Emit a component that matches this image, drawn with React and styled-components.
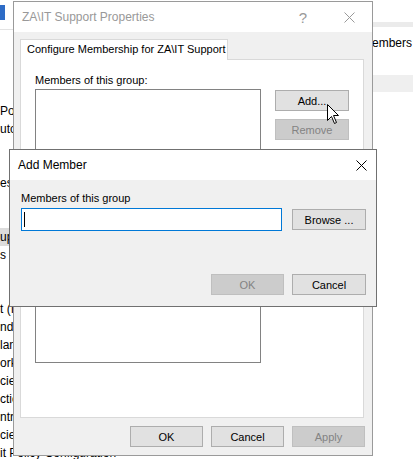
import React from 'react';
import styled, { createGlobalStyle } from 'styled-components';

const GlobalStyle = createGlobalStyle`
  html, body {
    margin: 0;
    padding: 0;
    background: #fff;
  }
  body {
    font-family: "Liberation Sans", Arial, sans-serif;
    font-size: 11px;
    color: #000;
    overflow: hidden;
  }
`;

const Desktop = styled.div`
  position: relative;
  width: 413px;
  height: 459px;
  overflow: hidden;
  background: #fff;
`;

/* the console behind the dialogs */
const Console = styled.div`
  display: flex;
  flex-direction: column;
  height: 100%;
`;

const Toolbar = styled.div`
  height: 22px;
  flex-shrink: 0;
  display: flex;
  align-items: flex-start;
`;

const ToolIcon = styled.div`
  width: 5px;
  height: 15px;
  margin-top: 5px;
  background: #2e6cc6;
`;

const Main = styled.div`
  display: flex;
  flex: 1;
`;

const TreePane = styled.div`
  width: 200px;
  flex-shrink: 0;
`;

const TreeTop = styled.div`
  height: 7px;
  border-bottom: 1px solid #e3e3e3;
  margin-bottom: 72px;
`;

const TreeRow = styled.div`
  height: 18px;
  line-height: 18px;
  white-space: nowrap;
  font-size: 12px;
  background: ${p => (p.$selected ? '#dcdcdc' : 'transparent')};
`;

const ListPane = styled.div`
  flex: 1;
  display: flex;
  flex-direction: column;
`;

const ListTop = styled.div`
  height: 5px;
  background: #ebebeb;
`;

const ListHeader = styled.div`
  height: 32px;
  line-height: 32px;
  padding-left: 162px;
  font-size: 12px;
  white-space: nowrap;
  margin-bottom: 16px;
`;

const ListRow = styled.div`
  height: 17px;
  background: ${p => (p.$selected ? '#efefef' : 'transparent')};
`;

/* dialogs */
const Window = styled.div`
  position: absolute;
  left: ${p => p.$x}px;
  top: ${p => p.$y}px;
  width: ${p => p.$w}px;
  height: ${p => p.$h}px;
  box-sizing: border-box;
  border: 1px solid ${p => (p.$active ? '#707070' : '#9a9a9a')};
  background: #f0f0f0;
  display: flex;
  flex-direction: column;
`;

const TitleBar = styled.div`
  height: 30px;
  flex-shrink: 0;
  background: #fff;
  display: flex;
  align-items: center;
  padding-left: 8px;
`;

const Title = styled.div`
  flex: 1;
  font-size: 12px;
  color: ${p => (p.$active ? '#000' : '#999')};
  white-space: nowrap;
`;

const CaptionButton = styled.div`
  width: ${p => p.$w}px;
  height: 30px;
  display: flex;
  align-items: center;
  justify-content: center;
  color: ${p => (p.$active ? '#000' : '#999')};
  font-size: 15px;
`;

const PropsBody = styled.div`
  flex: 1;
  display: flex;
  flex-direction: column;
  padding: 7px 8px 0 6px;
`;

const TabStrip = styled.div`
  display: flex;
  position: relative;
  z-index: 1;
  margin-bottom: -1px;
`;

const Tab = styled.div`
  height: 21px;
  box-sizing: border-box;
  width: 208px;
  border: 1px solid #d9d9d9;
  border-bottom: none;
  background: #fff;
  padding-left: 6px;
  line-height: 19px;
  white-space: nowrap;
`;

const TabPanel = styled.div`
  height: 359px;
  box-sizing: border-box;
  border: 1px solid #d9d9d9;
  background: #fff;
  padding: 13px 14px 0 14px;
`;

const Label = styled.div`
  line-height: 14px;
  margin-bottom: ${p => p.$gap}px;
  white-space: nowrap;
`;

const MembersRow = styled.div`
  display: flex;
  gap: 14px;
`;

const ListBox = styled.div`
  width: 228px;
  height: 274px;
  box-sizing: border-box;
  border: 1px solid #828282;
  background: #fff;
`;

const ButtonColumn = styled.div`
  display: flex;
  flex-direction: column;
  gap: 8px;
  padding-top: 1px;
`;

const Button = styled.div`
  width: ${p => p.$w || 73}px;
  height: 21px;
  box-sizing: border-box;
  border: 1px solid ${p => (p.$disabled ? '#bfbfbf' : '#adadad')};
  background: ${p => (p.$disabled ? '#cccccc' : '#e1e1e1')};
  color: ${p => (p.$disabled ? '#838383' : '#000')};
  display: flex;
  align-items: center;
  justify-content: center;
  white-space: nowrap;
`;

const Footer = styled.div`
  display: flex;
  justify-content: flex-end;
  gap: 8px;
  padding-top: ${p => p.$top}px;
  margin-right: ${p => p.$right || 0}px;
`;

const AddBody = styled.div`
  flex: 1;
  padding: 11px 10px 0 11px;
`;

const InputRow = styled.div`
  display: flex;
  align-items: center;
  gap: 10px;
`;

const InputBox = styled.div`
  width: 261px;
  height: 23px;
  box-sizing: border-box;
  border: 1px solid #0078d7;
  background: #fff;
  display: flex;
  align-items: center;
  padding-left: 2px;
`;

const Caret = styled.div`
  width: 1px;
  height: 15px;
  background: #000;
`;

const Pointer = styled.svg`
  position: absolute;
  left: 327px;
  top: 104px;
`;

const CloseIcon = ({ color }) => (
  <svg width="11" height="11" viewBox="0 0 11 11">
    <path d="M0.5 0.5 L10.5 10.5 M10.5 0.5 L0.5 10.5" stroke={color} strokeWidth="1" fill="none" />
  </svg>
);

const treeRows = [
  'Policies', 'utomatic', '', '', 'es', '', '', 'up', 's', '', '',
  't (Internet', 'ndows', 'lan', 'ork', 'cies', 'ctions', 'ntrol', 'cies',
  'it Policy Configuration',
];

export default function App() {
  return (
    <Desktop>
      <GlobalStyle />
      <Console>
        <Toolbar>
          <ToolIcon />
        </Toolbar>
        <Main>
          <TreePane>
            <TreeTop />
            {treeRows.map((t, i) => (
              <TreeRow key={i} $selected={i === 7}>{t || '\u00a0'}</TreeRow>
            ))}
          </TreePane>
          <ListPane>
            <ListTop />
            <ListHeader>Members</ListHeader>
            <ListRow $selected />
          </ListPane>
        </Main>
      </Console>

      <Window $x={13} $y={1} $w={360} $h={455}>
        <TitleBar>
          <Title>ZA\IT Support Properties</Title>
          <CaptionButton $w={46}>?</CaptionButton>
          <CaptionButton $w={46}><CloseIcon color="#999" /></CaptionButton>
        </TitleBar>
        <PropsBody>
          <TabStrip>
            <Tab>Configure Membership for ZA\IT Support</Tab>
          </TabStrip>
          <TabPanel>
            <Label $gap={2}>Members of this group:</Label>
            <MembersRow>
              <ListBox />
              <ButtonColumn>
                <Button $w={74}>Add...</Button>
                <Button $w={74} $disabled>Remove</Button>
              </ButtonColumn>
            </MembersRow>
          </TabPanel>
          <Footer $top={8} $right={-1}>
            <Button>OK</Button>
            <Button>Cancel</Button>
            <Button $disabled>Apply</Button>
          </Footer>
        </PropsBody>
      </Window>

      <Window $x={9} $y={149} $w={368} $h={158} $active>
        <TitleBar>
          <Title $active>Add Member</Title>
          <CaptionButton $w={29} $active><CloseIcon color="#000" /></CaptionButton>
        </TitleBar>
        <AddBody>
          <Label $gap={3}>Members of this group</Label>
          <InputRow>
            <InputBox><Caret /></InputBox>
            <Button $w={74}>Browse ...</Button>
          </InputRow>
          <Footer $top={43}>
            <Button $disabled>OK</Button>
            <Button $w={74}>Cancel</Button>
          </Footer>
        </AddBody>
      </Window>

      <Pointer width="13" height="21" viewBox="0 0 13 21">
        <path d="M0.5 0.5 L0.5 16.5 L4.5 12.5 L7.5 19.5 L9.5 18.5 L6.5 11.5 L11.5 11.5 Z" fill="#fff" stroke="#000" strokeWidth="1" strokeLinejoin="miter" />
      </Pointer>
    </Desktop>
  );
}
